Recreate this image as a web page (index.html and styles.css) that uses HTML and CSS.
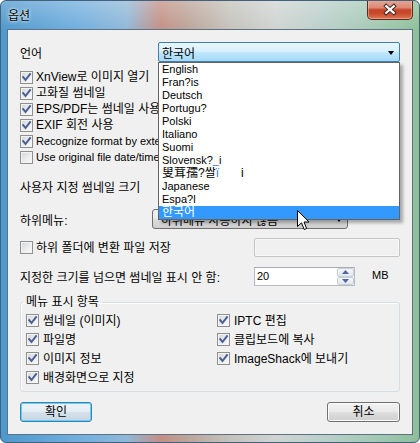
FILE: index.html
```html
<!DOCTYPE html>
<html lang="ko">
<head>
<meta charset="utf-8">
<title>옵션</title>
<link rel="stylesheet" href="styles.css">
</head>
<body>
<div class="window">
  <div class="titlebar">
    <span class="title">옵션</span>
    <div class="close">
      <svg width="46" height="19" viewBox="0 0 46 19">
        <path d="M19 6 L27 13 M27 6 L19 13" stroke="#3a2a28" stroke-width="4.2" stroke-linecap="square" fill="none"/>
        <path d="M19 6 L27 13 M27 6 L19 13" stroke="#ffffff" stroke-width="2.2" stroke-linecap="square" fill="none"/>
      </svg>
    </div>
  </div>
  <div class="panel">
    <div class="row row-lang">
      <span class="label lang-label">언어</span>
      <div class="combo combo-open"><span class="combo-text">한국어</span><span class="arrow"></span></div>
    </div>

    <div class="checks">
      <div class="check"><span class="cb"><svg viewBox="0 0 11 11"><path d="M2.2 5.2 L4.5 8 L9 2.2" class="tick"/></svg></span><span class="ctext">XnView로 이미지 열기</span></div>
      <div class="check"><span class="cb"><svg viewBox="0 0 11 11"><path d="M2.2 5.2 L4.5 8 L9 2.2" class="tick"/></svg></span><span class="ctext">고화질 썸네일</span></div>
      <div class="check"><span class="cb"><svg viewBox="0 0 11 11"><path d="M2.2 5.2 L4.5 8 L9 2.2" class="tick"/></svg></span><span class="ctext">EPS/PDF는 썸네일 사용 안 함</span></div>
      <div class="check"><span class="cb"><svg viewBox="0 0 11 11"><path d="M2.2 5.2 L4.5 8 L9 2.2" class="tick"/></svg></span><span class="ctext">EXIF 회전 사용</span></div>
      <div class="check"><span class="cb"><svg viewBox="0 0 11 11"><path d="M2.2 5.2 L4.5 8 L9 2.2" class="tick"/></svg></span><span class="ctext en">Recognize format by extension</span></div>
      <div class="check"><span class="cb"></span><span class="ctext en">Use original file date/time</span></div>
    </div>

    <div class="heading">사용자 지정 썸네일 크기</div>

    <div class="row row-sub">
      <span class="label sub-label">하위메뉴:</span>
      <div class="combo combo-gray"><span class="combo-text">하위메뉴 사용하지 않음</span><span class="arrow"></span></div>
    </div>

    <div class="row row-folder">
      <div class="check"><span class="cb"></span><span class="ctext">하위 폴더에 변환 파일 저장</span></div>
      <div class="textbox-disabled"></div>
    </div>

    <div class="row row-max">
      <span class="label max-label">지정한 크기를 넘으면 썸네일 표시 안 함:</span>
      <div class="spin">
        <span class="spin-value">20</span>
        <div class="spin-btns">
          <span class="spin-btn"><svg width="7" height="4" viewBox="0 0 7 4"><path d="M0 4 L3.5 0 L7 4 Z" fill="#4c66a6"/></svg></span>
          <span class="spin-btn"><svg width="7" height="4" viewBox="0 0 7 4"><path d="M0 0 L3.5 4 L7 0 Z" fill="#4c66a6"/></svg></span>
        </div>
      </div>
      <span class="unit">MB</span>
    </div>

    <fieldset class="group">
      <legend class="group-title">메뉴 표시 항목</legend>
      <div class="group-grid">
        <div class="check"><span class="cb"><svg viewBox="0 0 11 11"><path d="M2.2 5.2 L4.5 8 L9 2.2" class="tick"/></svg></span><span class="ctext">썸네일 (이미지)</span></div>
        <div class="check"><span class="cb"><svg viewBox="0 0 11 11"><path d="M2.2 5.2 L4.5 8 L9 2.2" class="tick"/></svg></span><span class="ctext">IPTC 편집</span></div>
        <div class="check"><span class="cb"><svg viewBox="0 0 11 11"><path d="M2.2 5.2 L4.5 8 L9 2.2" class="tick"/></svg></span><span class="ctext">파일명</span></div>
        <div class="check"><span class="cb"><svg viewBox="0 0 11 11"><path d="M2.2 5.2 L4.5 8 L9 2.2" class="tick"/></svg></span><span class="ctext">클립보드에 복사</span></div>
        <div class="check"><span class="cb"><svg viewBox="0 0 11 11"><path d="M2.2 5.2 L4.5 8 L9 2.2" class="tick"/></svg></span><span class="ctext">이미지 정보</span></div>
        <div class="check"><span class="cb"><svg viewBox="0 0 11 11"><path d="M2.2 5.2 L4.5 8 L9 2.2" class="tick"/></svg></span><span class="ctext">ImageShack에 보내기</span></div>
        <div class="check"><span class="cb"><svg viewBox="0 0 11 11"><path d="M2.2 5.2 L4.5 8 L9 2.2" class="tick"/></svg></span><span class="ctext">배경화면으로 지정</span></div>
      </div>
    </fieldset>

    <div class="buttons">
      <button class="btn btn-default">확인</button>
      <button class="btn btn-cancel">취소</button>
    </div>

    <div class="dropdown">
      <div class="item en">English</div>
      <div class="item en">Fran?is</div>
      <div class="item en">Deutsch</div>
      <div class="item en">Portugu?</div>
      <div class="item en">Polski</div>
      <div class="item en">Italiano</div>
      <div class="item en">Suomi</div>
      <div class="item en">Slovensk?<span class="odd">_</span>i</div>
      <div class="item">叟茸孺?쌀<span class="odd">ï</span><span class="gap"></span>i</div>
      <div class="item en">Japanese</div>
      <div class="item en">Espa?l</div>
      <div class="item selected">한국어</div>
    </div>

    <svg class="cursor" width="13" height="21" viewBox="0 0 13 21">
      <path d="M0.5 0.5 L0.5 16.5 L4.5 12.8 L7.2 19.5 L9.6 18.5 L7 12 L12 12 Z" fill="#ffffff" stroke="#000000" stroke-width="1" stroke-linejoin="miter"/>
    </svg>
  </div>
</div>
</body>
</html>
```

FILE: styles.css
```css
html, body {
  margin: 0;
  padding: 0;
  background: #ffffff;
}

body {
  font-family: "Liberation Sans", "Noto Sans CJK KR", sans-serif;
  font-size: 12px;
  color: #000000;
}

.window {
  width: 420px;
  height: 443px;
  box-sizing: border-box;
  border: 1px solid #44607a;
  border-radius: 6px;
  display: flex;
  flex-direction: column;
  position: relative;
  overflow: hidden;
  background:
    linear-gradient(to bottom, rgba(255,255,255,0.25), rgba(255,255,255,0) 30px),
    linear-gradient(to right, #4e98cd 0%, #70aede 18%, #8fb8d8 30%, #c48f84 38%, #bca296 44%, #c4c3bc 55%, #cfd4d2 66%, #b8cfc9 78%, #9ec7ae 92%, #8dbf98 100%);
}

.titlebar {
  height: 28px;
  flex: none;
  display: flex;
  align-items: flex-start;
  padding-left: 7px;
}

.title {
  padding-top: 7px;
  line-height: 16px;
  font-size: 12px;
  color: #000000;
  text-shadow: 0 0 4px rgba(255,255,255,0.9), 0 0 2px rgba(255,255,255,0.9);
}

.close {
  margin-left: auto;
  margin-right: 6px;
  margin-top: -1px;
  width: 46px;
  height: 20px;
  box-sizing: border-box;
  border: 1px solid #5a2a20;
  border-top: none;
  border-radius: 0 0 5px 5px;
  background: linear-gradient(to bottom, #e8a898 0%, #dc8a74 40%, #c6452a 52%, #c8492c 70%, #dc7652 100%);
  box-shadow: inset 0 0 0 1px rgba(255,210,190,0.45);
  display: flex;
  align-items: center;
  justify-content: center;
}

.close svg {
  display: block;
}

.panel {
  flex: 1;
  margin: 0 6px 7px 6px;
  border: 1px solid #5f7284;
  background: #f0f0f0;
  position: relative;
  padding: 12px 12px 0 12px;
  box-sizing: border-box;
}

.row {
  display: flex;
  align-items: center;
}

.label {
  flex: none;
  white-space: nowrap;
}

.row-lang {
  height: 20px;
}

.lang-label {
  width: 138px;
}

.combo {
  box-sizing: border-box;
  height: 20px;
  display: flex;
  align-items: center;
  position: relative;
  padding-left: 3px;
  white-space: nowrap;
  overflow: hidden;
}

.combo-open {
  width: 242px;
  border: 1px solid #3c7fb1;
  border-radius: 2px;
  background: linear-gradient(to bottom, #eaf6fd 0%, #d9f0fc 45%, #bee6fd 55%, #a7d9f5 100%);
}

.combo-gray {
  width: 196px;
  border: 1px solid #707070;
  border-radius: 3px;
  background: linear-gradient(to bottom, #f2f2f2 0%, #ebebeb 45%, #dddddd 55%, #cfcfcf 100%);
  padding-left: 8px;
}

.combo-text {
  flex: 1;
}

.arrow {
  width: 0;
  height: 0;
  border-left: 3.5px solid transparent;
  border-right: 3.5px solid transparent;
  border-top: 4px solid #000000;
  margin-right: 5px;
  margin-top: 1px;
}

.checks {
  margin-top: 7px;
  display: flex;
  flex-direction: column;
}

.checks .ctext {
  max-width: 123px;
  overflow: hidden;
  white-space: nowrap;
}

.check {
  height: 16px;
  display: flex;
  align-items: center;
  white-space: nowrap;
}

.cb {
  width: 13px;
  height: 13px;
  flex: none;
  box-sizing: border-box;
  border: 1px solid #8e8f8f;
  background: linear-gradient(135deg, #d3d5d8 0%, #eeeeef 60%, #fbfbfb 100%);
  box-shadow: inset 0 0 0 1px #f4f4f4;
  display: flex;
}

.cb svg {
  width: 11px;
  height: 11px;
  display: block;
}

.tick {
  fill: none;
  stroke: #4a5f97;
  stroke-width: 2;
  stroke-linecap: square;
}

.ctext {
  margin-left: 3px;
  line-height: 16px;
}

.en {
  font-size: 11px;
}

.heading {
  margin-top: 15px;
  height: 16px;
  line-height: 16px;
}

.row-sub {
  margin-top: 13px;
  height: 20px;
}

.sub-label {
  width: 132px;
}

.row-folder {
  margin-top: 9px;
  height: 19px;
  justify-content: space-between;
}

.textbox-disabled {
  width: 146px;
  height: 19px;
  box-sizing: border-box;
  border: 1px solid #c2c5c8;
  border-radius: 2px;
  background: #f0f0f0;
  box-shadow: inset 0 0 0 1px #f7f7f7;
}

.row-max {
  margin-top: 10px;
  height: 19px;
}

.max-label {
  width: 234px;
}

.spin {
  width: 101px;
  height: 19px;
  box-sizing: border-box;
  border: 1px solid #b8bcc2;
  border-top-color: #abadb3;
  background: #ffffff;
  display: flex;
  align-items: stretch;
}

.spin-value {
  flex: 1;
  padding-left: 2px;
  line-height: 17px;
  font-size: 11px;
}

.spin-btns {
  width: 17px;
  display: flex;
  flex-direction: column;
}

.spin-btn {
  flex: 1;
  box-sizing: border-box;
  border: 1px solid #c7ced8;
  border-radius: 2px;
  background: linear-gradient(to bottom, #f4f6f9, #e2e7ee);
  display: flex;
  align-items: center;
  justify-content: center;
}

.spin-btn svg {
  display: block;
}

.unit {
  margin-left: 17px;
  margin-top: -3px;
  font-size: 11px;
}

.group {
  margin: 9px 0 0 0;
  padding: 2px 0 4px 2px;
  border: 1px solid #d5dfe5;
  border-radius: 3px;
  min-width: 0;
  box-shadow: inset 1px 1px 0 #ffffff;
}

.group-title {
  padding: 0 3px;
  line-height: 14px;
  height: 14px;
}

.group-grid {
  margin-left: 3px;
  display: grid;
  grid-template-columns: 191px 1fr;
  grid-auto-rows: 19px;
}

.group-grid .check {
  height: 19px;
}

.group-grid .ctext {
  margin-left: 4px;
}

.buttons {
  margin-top: 10px;
  display: flex;
  justify-content: space-between;
}

.btn {
  height: 20px;
  box-sizing: border-box;
  font-family: "Liberation Sans", "Noto Sans CJK KR", sans-serif;
  font-size: 12px;
  color: #000000;
  padding: 0;
  border-radius: 3px;
  line-height: 16px;
}

.btn-default {
  width: 72px;
  border: 1px solid #3c7fb1;
  background: linear-gradient(to bottom, #eef4f8 0%, #e4eef4 45%, #d4e1ea 55%, #c6d7e2 100%);
  box-shadow: inset 0 0 0 1px #62d0f8;
}

.btn-cancel {
  width: 73px;
  border: 1px solid #707070;
  background: linear-gradient(to bottom, #f2f2f2 0%, #ebebeb 45%, #dddddd 55%, #cfcfcf 100%);
  box-shadow: inset 0 0 0 1px #fbfbfb;
}

.dropdown {
  position: absolute;
  left: 150px;
  top: 32px;
  width: 242px;
  box-sizing: border-box;
  border: 1px solid #646464;
  background: #ffffff;
  box-shadow: 3px 3px 3px rgba(0,0,0,0.3);
}

.item {
  height: 13px;
  line-height: 13px;
  padding-left: 3px;
  white-space: pre;
  overflow: hidden;
}

.item.selected {
  background: #3399ff;
  color: #ffffff;
}

.odd {
  color: #3a7bc8;
}

.gap {
  display: inline-block;
  width: 22px;
}

.cursor {
  position: absolute;
  left: 289px;
  top: 180px;
  display: block;
}
```
